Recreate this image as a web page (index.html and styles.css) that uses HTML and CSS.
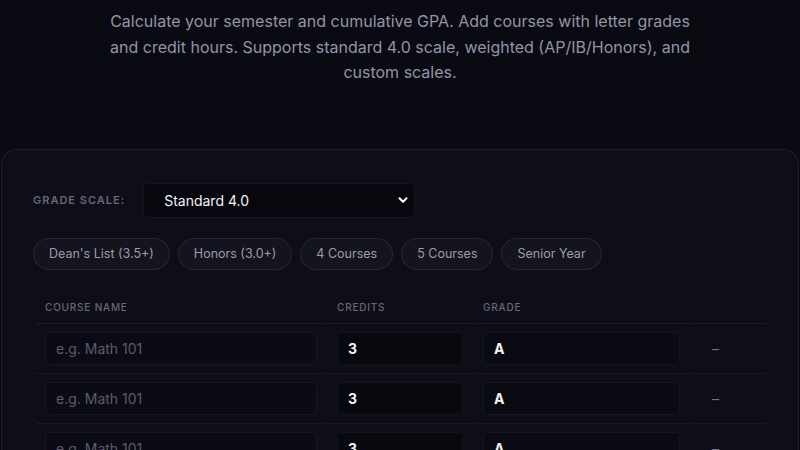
FILE: index.html
```html
<!DOCTYPE html>
<html lang="en">
<head>
<meta charset="utf-8">
<title>GPA Calculator</title>
<link rel="stylesheet" href="styles.css">
</head>
<body>
<main class="page">
  <p class="intro">Calculate your semester and cumulative GPA. Add courses with letter grades and credit hours. Supports standard 4.0 scale, weighted (AP/IB/Honors), and custom scales.</p>
  <section class="card">
    <div class="scale-row">
      <label class="scale-label" for="scale">Grade scale:</label>
      <div class="select-wrap">
        <select id="scale" class="scale-select">
          <option>Standard 4.0</option>
          <option>Weighted 5.0</option>
          <option>Custom</option>
        </select>
        <svg class="chev" width="12" height="12" viewBox="0 0 12 12" aria-hidden="true"><path d="M2.5 4.2 L6 7.7 L9.5 4.2" fill="none" stroke="#ffffff" stroke-width="2" stroke-linecap="round" stroke-linejoin="round"/></svg>
      </div>
    </div>
    <div class="presets">
      <button class="pill">Dean's List (3.5+)</button>
      <button class="pill">Honors (3.0+)</button>
      <button class="pill">4 Courses</button>
      <button class="pill">5 Courses</button>
      <button class="pill">Senior Year</button>
    </div>
    <table class="courses">
      <thead>
        <tr>
          <th class="c-name">Course Name</th>
          <th class="c-cred">Credits</th>
          <th class="c-grade">Grade</th>
          <th class="c-rm"></th>
        </tr>
      </thead>
      <tbody>
        <tr>
          <td><input class="field" type="text" placeholder="e.g. Math 101"></td>
          <td><input class="field num" type="text" value="3"></td>
          <td><select class="field grade"><option>A</option></select></td>
          <td class="rm-cell"><button class="rm">–</button></td>
        </tr>
        <tr>
          <td><input class="field" type="text" placeholder="e.g. Math 101"></td>
          <td><input class="field num" type="text" value="3"></td>
          <td><select class="field grade"><option>A</option></select></td>
          <td class="rm-cell"><button class="rm">–</button></td>
        </tr>
        <tr>
          <td><input class="field" type="text" placeholder="e.g. Math 101"></td>
          <td><input class="field num" type="text" value="3"></td>
          <td><select class="field grade"><option>A</option></select></td>
          <td class="rm-cell"><button class="rm">–</button></td>
        </tr>
      </tbody>
    </table>
  </section>
</main>
</body>
</html>
```
FILE: styles.css
```css
* { box-sizing: border-box; }
html, body { margin: 0; padding: 0; }
body {
  background: #0a0a13;
  font-family: Inter, "Noto Sans", sans-serif;
  color: #e8e8f0;
  overflow: hidden;
}
.page {
  padding: 9px 0 0;
}
.intro {
  margin: 0 auto;
  max-width: 600px;
  text-align: center;
  font-size: 16px;
  line-height: 25.5px;
  color: #9494a6;
}
.card {
  margin: 63px 1px 0;
  background: #0e0e19;
  border: 1px solid rgba(255,255,255,0.07);
  border-radius: 16px;
  padding: 33px 32px 40px 31px;
  min-height: 400px;
}
.scale-row {
  display: flex;
  align-items: center;
  gap: 18px;
}
.scale-label {
  font-size: 11px;
  font-weight: 600;
  letter-spacing: 1px;
  text-transform: uppercase;
  color: #66667a;
}
.select-wrap {
  position: relative;
}
.scale-select {
  appearance: none;
  -webkit-appearance: none;
  width: 272px;
  height: 35px;
  background: #07070d;
  border: 1px solid rgba(255,255,255,0.06);
  border-radius: 5px;
  color: #f2f2f7;
  font-family: Inter, "Noto Sans", sans-serif;
  font-size: 14px;
  padding: 0 20px;
}
.chev {
  position: absolute;
  right: 6px;
  top: 11px;
  pointer-events: none;
}
.presets {
  display: flex;
  gap: 8px;
  margin-top: 20px;
}
.pill {
  height: 32px;
  padding: 0 15px;
  border-radius: 16px;
  background: #14141f;
  border: 1px solid rgba(255,255,255,0.08);
  color: #9c9cae;
  font-family: Inter, "Noto Sans", sans-serif;
  font-size: 12.5px;
}
.courses {
  margin-top: 22px;
  width: 734px;
  border-collapse: separate;
  border-spacing: 2px 0;
  margin-left: 1px;
}
.courses th {
  text-align: left;
  font-size: 10px;
  font-weight: 500;
  letter-spacing: 0.8px;
  text-transform: uppercase;
  color: #676779;
  padding: 9px 9px 9px;
  line-height: 13px;
  border-bottom: 1px solid rgba(255,255,255,0.06);
}
.c-name { width: 290px; }
.c-cred { width: 144px; }
.c-grade { width: 215px; }
.courses td {
  padding: 8px 9px;
  border-bottom: 1px solid rgba(255,255,255,0.05);
}
.field {
  display: block;
  width: 100%;
  height: 33px;
  background: #0b0b15;
  border: 1px solid rgba(255,255,255,0.05);
  border-radius: 5px;
  color: #f4f4f8;
  font-family: Inter, "Noto Sans", sans-serif;
  font-size: 14px;
  padding: 0 10px;
}
.field::placeholder { color: #5c5c6c; }
.num {
  background: #08080f;
  font-weight: 700;
}
.grade {
  appearance: none;
  -webkit-appearance: none;
  font-weight: 700;
  background: #0a0a12;
}
.rm-cell { text-align: left; }
.rm {
  background: none;
  border: none;
  color: #74748a;
  font-size: 14px;
  padding: 0 0 0 12px;
  font-family: Inter, "Noto Sans", sans-serif;
}
```
